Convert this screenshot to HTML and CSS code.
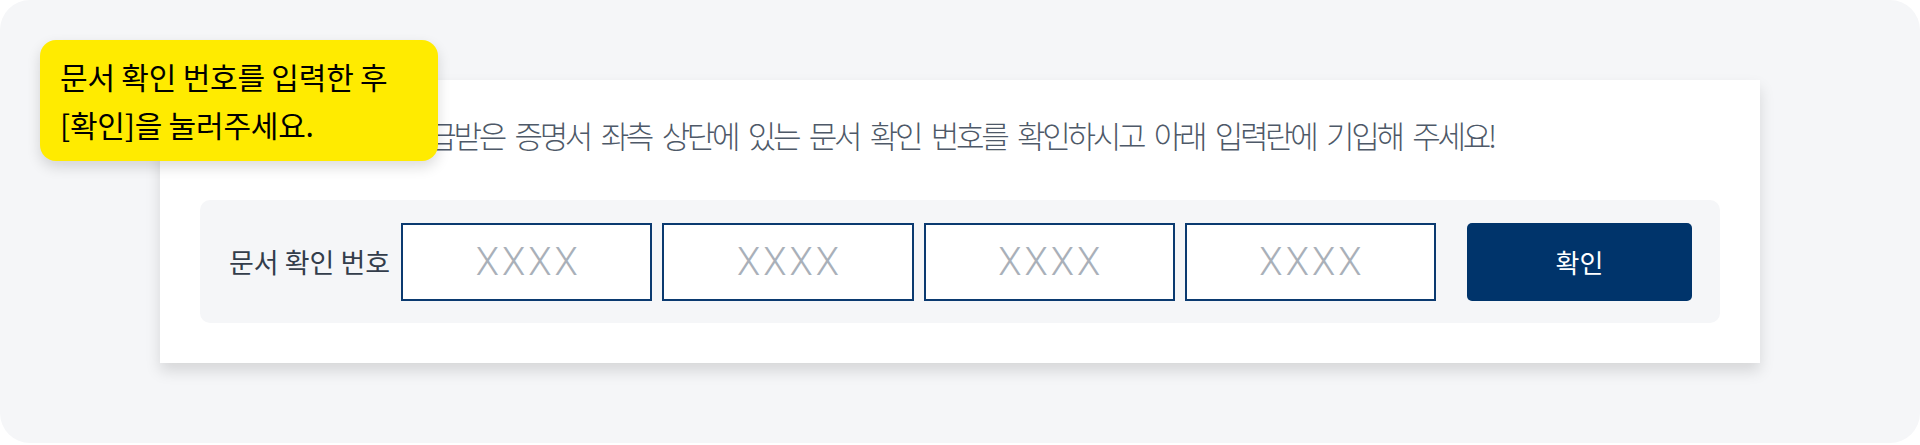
FILE: index.html
```html
<!DOCTYPE html>
<html>
<head>
  <title>문서 확인</title>
  <link rel="stylesheet" href="styles.css">
</head>
<body>
  <div class="page">
    <div class="tooltip">
      문서 확인 번호를 입력한 후<br>
      [확인]을 눌러주세요.
    </div>

    <div class="card">
      <p class="guide">발급받은 증명서 좌측 상단에 있는 문서 확인 번호를 확인하시고 아래 입력란에 기입해 주세요!</p>

      <form class="check-box" onsubmit="return false">
        <label class="check-label" for="num1">문서 확인 번호</label>
        <input class="check-input" type="text" id="num1" maxlength="4" placeholder="XXXX">
        <input class="check-input" type="text" id="num2" maxlength="4" placeholder="XXXX">
        <input class="check-input" type="text" id="num3" maxlength="4" placeholder="XXXX">
        <input class="check-input" type="text" id="num4" maxlength="4" placeholder="XXXX">
        <button class="check-button" type="submit">확인</button>
      </form>
    </div>
  </div>
</body>
</html>
```

FILE: styles.css
```css
body {
  margin: 0;
  font-family: "Noto Sans CJK KR", "Noto Sans", sans-serif;
}

.page {
  position: relative;
  height: 443px;
  box-sizing: border-box;
  padding: 80px 160px 0;
  background-color: #f5f6f8;
  border-radius: 30px;
}

.tooltip {
  position: absolute;
  top: 40px;
  left: 40px;
  width: 398px;
  height: 121px;
  box-sizing: border-box;
  padding: 12px 20px;
  background-color: #ffeb00;
  border-radius: 16px;
  box-shadow: 0 6px 14px rgba(0, 0, 0, 0.14);
  color: #000;
  font-size: 30px;
  line-height: 48px;
  letter-spacing: -0.2px;
  z-index: 2;
}

.card {
  height: 283px;
  box-sizing: border-box;
  padding: 35px 40px 40px;
  background-color: #fff;
  box-shadow: 0 8px 14px rgba(0, 0, 0, 0.13);
}

.guide {
  margin: 0 0 45px 203px;
  color: #4e5968;
  font-size: 31px;
  font-weight: 300;
  line-height: 40px;
  letter-spacing: -3.3px;
  word-spacing: 7px;
  white-space: nowrap;
}

.check-box {
  display: flex;
  align-items: center;
  gap: 10px;
  height: 123px;
  box-sizing: border-box;
  padding: 0 28px 0 29px;
  background-color: #f5f6f8;
  border-radius: 10px;
}

.check-label {
  margin-right: 1px;
  color: #333d4b;
  font-size: 27px;
  white-space: nowrap;
}

.check-input {
  flex: 1;
  min-width: 0;
  height: 78px;
  box-sizing: border-box;
  padding: 0 0 0 3px;
  border: 2px solid #0b3a70;
  background-color: #fff;
  font-family: Roboto, "Noto Sans", sans-serif;
  font-size: 38px;
  font-weight: 300;
  letter-spacing: 3px;
  text-align: center;
  color: #222;
}

.check-input::placeholder {
  color: #a9b0b9;
}

.check-button {
  width: 225px;
  height: 78px;
  margin-left: 21px;
  border: none;
  border-radius: 5px;
  background-color: #00346b;
  color: #fff;
  font-family: "Noto Sans CJK KR", sans-serif;
  font-size: 26px;
  cursor: pointer;
}
```
